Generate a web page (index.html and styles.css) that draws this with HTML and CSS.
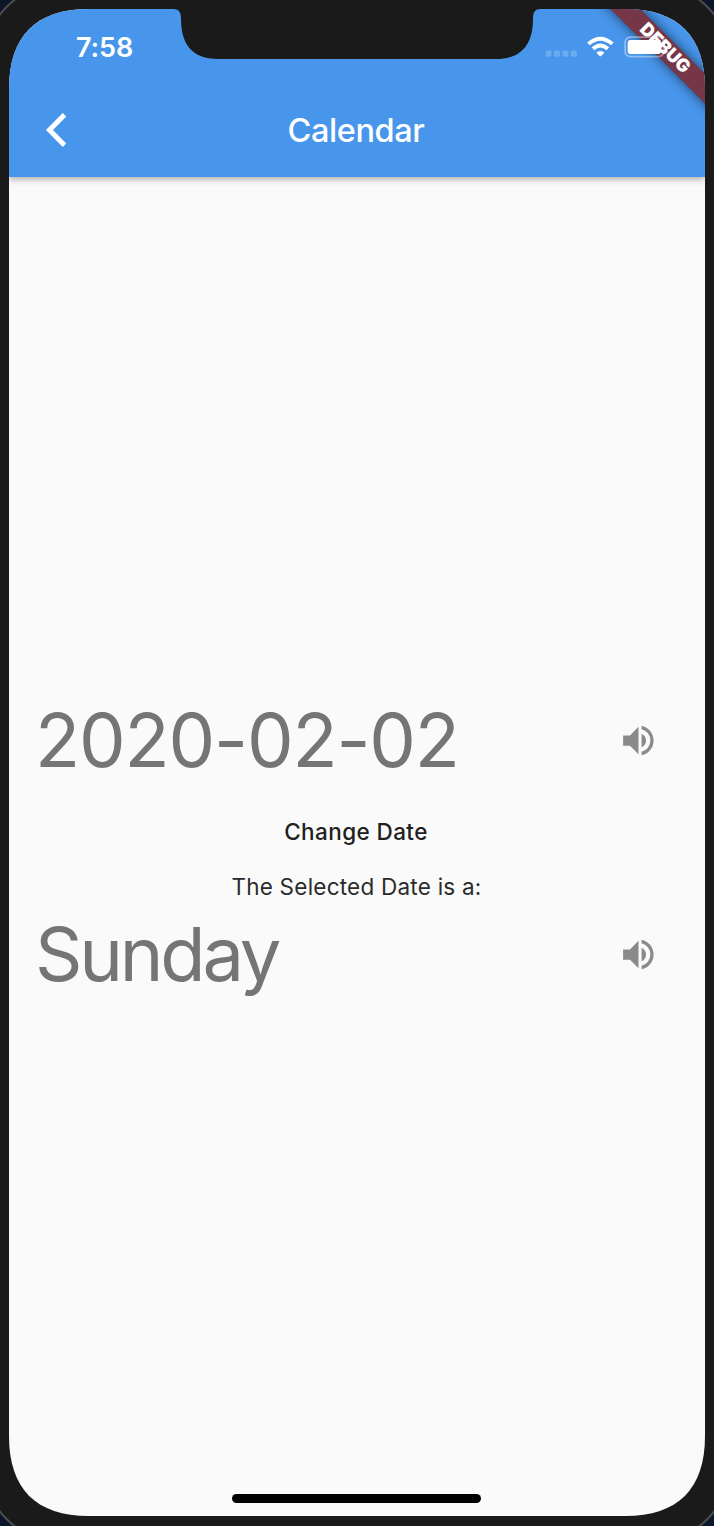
FILE: index.html
```html
<!DOCTYPE html>
<html lang="en">
<head>
<meta charset="utf-8">
<title>Calendar</title>
<link rel="stylesheet" href="styles.css">
</head>
<body>
<div class="desktop">
<div class="phone">
<main class="screen">
  <header class="app-bar">
    <div class="status-bar">
      <span class="time">7:58</span>
      <svg class="status-icons" width="120" height="24" viewBox="545 35 120 24">
        <g fill="#fff" fill-opacity=".2">
          <rect x="545.6" y="50.6" width="6" height="6.2" rx="1.7"/><rect x="554" y="50.6" width="6" height="6.2" rx="1.7"/><rect x="562.4" y="50.6" width="6" height="6.2" rx="1.7"/><rect x="570.8" y="50.6" width="6" height="6.2" rx="1.7"/>
        </g>
        <g fill="none" stroke="#fff" stroke-width="3.9">
          <path d="M588.5 43.9 Q600.4 33.5 612.3 43.9"/>
          <path d="M593 48.8 Q600.4 42.2 607.8 48.8"/>
        </g>
        <path d="M596.3 52.6 Q600.4 49.2 604.5 52.6 L601.2 56 Q600.4 56.7 599.6 56Z" fill="#fff"/>
        <rect x="625.1" y="37.1" width="38.6" height="19.6" rx="5.3" fill="none" stroke="#fff" stroke-opacity=".4" stroke-width="1.7"/>
        <rect x="627.7" y="39.9" width="33.4" height="14" rx="3" fill="#fff"/>
      </svg>
    </div>
    <nav class="toolbar">
      <svg class="back" width="24" height="36" viewBox="0 0 24 36"><path d="M20.5 2.8 5.5 18 20.5 33.2" fill="none" stroke="#fff" stroke-width="5"/></svg>
      <h1 class="title">Calendar</h1>
    </nav>
  </header>
  <section class="content">
    <div class="row">
      <span class="value date">2020-02-02</span>
      <svg class="speaker" width="41" height="41" viewBox="0 0 24 24"><path d="M3 9v6h4l5 5V4L7 9zM13.8 8v8A4.5 4.5 0 0 0 16.4 12 4.5 4.5 0 0 0 13.8 8zM13.8 3.3v2.1a6.8 6.8 0 0 1 0 13.2v2.1a8.9 8.9 0 0 0 0-17.4z"/></svg>
    </div>
    <button class="change">Change Date</button>
    <p class="caption">The Selected Date is a:</p>
    <div class="row">
      <span class="value day">Sunday</span>
      <svg class="speaker" width="41" height="41" viewBox="0 0 24 24"><path d="M3 9v6h4l5 5V4L7 9zM13.8 8v8A4.5 4.5 0 0 0 16.4 12 4.5 4.5 0 0 0 13.8 8zM13.8 3.3v2.1a6.8 6.8 0 0 1 0 13.2v2.1a8.9 8.9 0 0 0 0-17.4z"/></svg>
    </div>
  </section>
  <footer class="home"><div class="home-indicator"></div></footer>
  <div class="debug"></div>
  <div class="debug debug-label">DEBUG</div>
  <svg class="notch" width="372" height="52" viewBox="162 9 372 52"><path d="M162 9H173C179 9 181 12 181 19C181 44 192 59 218 59H496C522 59 533 44 533 19C533 12 535 9 541 9Z" fill="#1a1a1a"/></svg>
</main>
</div>
</div>
</body>
</html>
```

FILE: styles.css
```css
* { box-sizing: border-box; margin: 0; padding: 0; }
body { width: 714px; height: 1526px; overflow: hidden; font-family: Inter, "Liberation Sans", sans-serif; }
.desktop { display: flow-root; width: 714px; height: 1526px; background: #0b1728; overflow: hidden; }
.phone { width: 754px; height: 1566px; margin: -20px 0 0 -20px; padding: 27px; border: 2px solid #4c4d50; border-radius: 89px; background: #1a1a1a; }
.screen {
  position: relative; width: 696px; height: 1507px; display: flex; flex-direction: column; background: #fafafa; overflow: hidden;
  clip-path: path("M80 0H616C669 0 696 27 696 80V1427C696 1480 669 1507 616 1507H80C27 1507 0 1480 0 1427V80C0 27 27 0 80 0Z");
}
.app-bar { height: 168px; background: #4896ec; color: #fff; box-shadow: 0 2px 7px rgba(0,0,0,.34); }
.status-bar { position: relative; z-index: 2; height: 74px; display: flex; justify-content: space-between; padding: 22px 40px 0 67px; }
.time { font-size: 27px; line-height: 33px; font-weight: 600; letter-spacing: -.1px; }
.status-icons { margin-top: 4px; }
.toolbar { height: 94px; display: grid; grid-template-columns: 100px 1fr 102px; align-items: center; }
.back { margin-left: 35px; }
.title { font-size: 32.5px; font-weight: 500; line-height: 40px; padding-top: 2px; text-align: center; letter-spacing: -.4px; }
.content { flex: 1; display: flex; flex-direction: column; padding: 511px 29px 0 26px; }
.row { display: flex; justify-content: space-between; align-items: center; height: 104px; padding-right: 17px; }
.value { color: #757575; font-size: 74px; line-height: 88px; white-space: nowrap; }
.date { letter-spacing: -1.15px; }
.day { letter-spacing: -3.2px; }
.speaker { fill: #8a8a8a; }
.change { border: 0; background: none; height: 80px; color: #202020; font: 500 22.5px/28px Inter, sans-serif; letter-spacing: .4px; padding-right: 0; margin-left: 1px; }
.caption { height: 30px; line-height: 30px; color: #2b2b2b; font-size: 22.5px; letter-spacing: .23px; text-align: center; padding-left: 2px; }
.home { height: 30px; display: flex; justify-content: center; padding-top: 8px; }
.home-indicator { width: 249px; height: 9px; margin-right: 1px; border-radius: 5px; background: #000; }
.debug { position: absolute; z-index: 1; left: 555.5px; top: 29px; width: 200px; height: 20.6px; transform: rotate(45deg); background: #763648; box-shadow: 0 0 12px rgba(0,0,0,.6); }
.debug-label { z-index: 3; background: none; box-shadow: none; color: #fff; text-align: center; font-size: 18px; line-height: 20.6px; font-weight: 900; }
.notch { position: absolute; z-index: 3; left: 153px; top: 0; overflow: visible; }
```
